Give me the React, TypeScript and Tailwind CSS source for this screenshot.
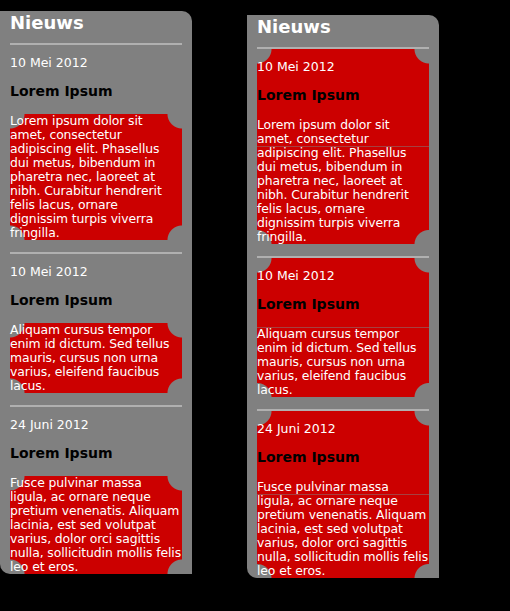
const items = [
  {
    date: '10 Mei 2012',
    title: 'Lorem Ipsum',
    lines: [
      'Lorem ipsum dolor sit',
      'amet, consectetur',
      'adipiscing elit. Phasellus',
      'dui metus, bibendum in',
      'pharetra nec, laoreet at',
      'nibh. Curabitur hendrerit',
      'felis lacus, ornare',
      'dignissim turpis viverra',
      'fringilla.',
    ],
  },
  {
    date: '10 Mei 2012',
    title: 'Lorem Ipsum',
    lines: [
      'Aliquam cursus tempor',
      'enim id dictum. Sed tellus',
      'mauris, cursus non urna',
      'varius, eleifend faucibus',
      'lacus.',
    ],
  },
  {
    date: '24 Juni 2012',
    title: 'Lorem Ipsum',
    lines: [
      'Fusce pulvinar massa',
      'ligula, ac ornare neque',
      'pretium venenatis. Aliquam',
      'lacinia, est sed volutpat',
      'varius, dolor orci sagittis',
      'nulla, sollicitudin mollis felis',
      'leo et eros.',
    ],
  },
];

// red box with the corners cut out (inverted rounded corners)
const notched =
  '[background:radial-gradient(circle_at_0_0,transparent_14px,#cc0000_15px)_top_left/50%_50%_no-repeat,radial-gradient(circle_at_100%_0,transparent_14px,#cc0000_15px)_top_right/50%_50%_no-repeat,radial-gradient(circle_at_0_100%,transparent_14px,#cc0000_15px)_bottom_left/50%_50%_no-repeat,radial-gradient(circle_at_100%_100%,transparent_14px,#cc0000_15px)_bottom_right/50%_50%_no-repeat]';

function Panel({ wholeItem }: { wholeItem: boolean }) {
  return (
    <div className="w-[192px] bg-[#808080] rounded-tr-[10px] rounded-bl-[10px] px-[10px] pt-[1px]">
      <h2 className="text-[18px] leading-[22px] font-bold text-white">Nieuws</h2>
      <div className="mt-[9px]">
        {items.map((item, i) => (
          <div key={i}>
            <div className={`h-[2px] bg-[#b0b0b0] ${i === 0 ? '' : 'mt-[12px]'}`} />
            <div className={wholeItem ? notched : ''}>
              <p className="pt-[10px] text-[12.5px] leading-[15px] text-white">{item.date}</p>
              <h3 className="mt-[13px] text-[14px] leading-[17px] font-bold text-black">{item.title}</h3>
              <p className={`mt-[14px] text-[12.4px] leading-[14px] tracking-[-0.1px] whitespace-nowrap text-white ${wholeItem ? '' : notched}`}>
                {item.lines.map((line, j) => (
                  <span key={j} className="block">
                    {line}
                  </span>
                ))}
              </p>
            </div>
          </div>
        ))}
      </div>
    </div>
  );
}

export default function App() {
  return (
    <div className="min-h-screen bg-black flex items-start font-['DejaVu_Sans',Verdana,sans-serif]">
      <div className="mt-[11px]">
        <Panel wholeItem={false} />
      </div>
      <div className="mt-[15px] ml-[55px]">
        <Panel wholeItem={true} />
      </div>
    </div>
  );
}
